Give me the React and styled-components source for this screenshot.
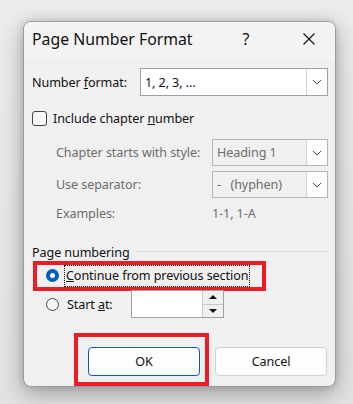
import React from "react";
import styled, { createGlobalStyle } from "styled-components";

const GlobalStyle = createGlobalStyle`
  html, body { margin: 0; padding: 0; }
  body {
    background: linear-gradient(#ececec, #e2e2e2);
    font-family: "Noto Sans", "Open Sans", sans-serif;
    color: #111111;
  }
  * { box-sizing: border-box; }
`;

const Page = styled.div`
  width: 353px;
  height: 404px;
  padding: 21px 0 0 23px;
  overflow: hidden;
`;

const Dialog = styled.div`
  width: 313px;
  height: 366px;
  border: 1px solid #9c9c9c;
  border-radius: 8px;
  background: #f0f0f0;
  box-shadow: 0 6px 22px rgba(0, 0, 0, 0.32), 0 0 6px rgba(0, 0, 0, 0.12);
  display: flex;
  flex-direction: column;
`;

const TitleBar = styled.div`
  height: 37px;
  flex: none;
  display: flex;
  align-items: center;
  padding-left: 8px;
  background: #f3f3f3;
  border-radius: 7px 7px 0 0;
`;

const Title = styled.div`
  flex: 1;
  font-size: 15.8px;
  color: #111111;
  padding-bottom: 3px;
`;

const TitleButton = styled.div`
  width: ${(p) => p.$w}px;
  margin-right: ${(p) => p.$mr || 0}px;
  height: 37px;
  display: flex;
  align-items: center;
  justify-content: center;
  font-size: 16px;
  color: #111111;
  padding-bottom: 3px;
`;

const Body = styled.div`
  flex: 1;
  padding: 9px 7px 0 8px;
  display: flex;
  flex-direction: column;
  font-size: 12.6px;
  letter-spacing: -0.1px;
`;

const Row = styled.div`
  display: flex;
  align-items: center;
  height: ${(p) => p.$h}px;
  margin-top: ${(p) => p.$mt || 0}px;
  padding-left: ${(p) => p.$indent || 0}px;
  position: relative;
  flex: none;
`;

const Label = styled.div`
  width: ${(p) => (p.$w ? `${p.$w}px` : "auto")};
  flex: none;
  color: ${(p) => (p.$disabled ? "#6d6d6d" : "#111111")};
  white-space: nowrap;
`;

const Select = styled.div`
  flex: 1;
  height: 100%;
  display: flex;
  border: 1px solid ${(p) => (p.$disabled ? "#b4b4b4" : "#a0a0a0")};
  background: ${(p) => (p.$disabled ? "#f0f0f0" : "#ffffff")};
`;

const SelectValue = styled.div`
  flex: 1;
  display: flex;
  align-items: center;
  padding-left: 4px;
  color: ${(p) => (p.$disabled ? "#6d6d6d" : "#111111")};
  white-space: pre;
`;

const SelectButton = styled.div`
  width: 21px;
  flex: none;
  display: flex;
  align-items: center;
  justify-content: center;
  background: #ffffff;
  border-left: 1px solid #d6d6d6;
`;

const Checkbox = styled.div`
  width: 15px;
  height: 15px;
  border: 1px solid #454545;
  border-radius: 3px;
  background: #f8f8f8;
  margin-right: 6px;
  flex: none;
`;

const Radio = styled.div`
  width: 13px;
  height: 13px;
  border-radius: 50%;
  flex: none;
  margin-right: 8px;
  display: flex;
  align-items: center;
  justify-content: center;
  border: ${(p) => (p.$checked ? "none" : "1px solid #454545")};
  background: ${(p) => (p.$checked ? "#005fb8" : "#f8f8f8")};
  &::after {
    content: "";
    display: ${(p) => (p.$checked ? "block" : "none")};
    width: 5px;
    height: 5px;
    border-radius: 50%;
    background: #ffffff;
  }
`;

const FocusLabel = styled.div`
  outline: 1px dotted #111111;
  outline-offset: 0;
  padding: 0 1px;
  margin-left: -2px;
  height: 20px;
  display: flex;
  align-items: center;
  white-space: nowrap;
`;

const GroupHeader = styled.div`
  display: flex;
  align-items: center;
  height: 18px;
  margin-top: 20px;
  flex: none;
  &::after {
    content: "";
    flex: 1;
    height: 1px;
    background: #d9d9d9;
    margin-left: 7px;
    margin-top: -2px;
  }
`;

const Highlight = styled.div`
  position: absolute;
  top: ${(p) => p.$t}px;
  left: ${(p) => p.$l}px;
  width: ${(p) => p.$w}px;
  height: ${(p) => p.$h}px;
  border: 4px solid #ed1c24;
  pointer-events: none;
`;

const Spinner = styled.div`
  width: 93px;
  height: 28px;
  border: 1px solid #a0a0a0;
  background: #ffffff;
  display: flex;
  justify-content: flex-end;
`;

const SpinButtons = styled.div`
  width: 21px;
  display: flex;
  flex-direction: column;
  border-left: 1px solid #c8c8c8;
`;

const SpinButton = styled.div`
  flex: 1;
  display: flex;
  align-items: center;
  justify-content: center;
  background: #f0f0f0;
  border-top: ${(p) => (p.$bottom ? "1px solid #c8c8c8" : "none")};
  &::after {
    content: "";
    width: 0;
    height: 0;
    border-left: 4px solid transparent;
    border-right: 4px solid transparent;
    ${(p) =>
      p.$bottom
        ? "border-top: 4px solid #111111;"
        : "border-bottom: 4px solid #111111;"}
  }
`;

const ButtonRow = styled.div`
  display: flex;
  justify-content: flex-end;
  gap: 15px;
  margin-top: 29px;
  padding-right: 1px;
  flex: none;
`;

const ButtonWrap = styled.div`
  position: relative;
`;

const Button = styled.div`
  width: 112px;
  height: 29px;
  border-radius: 4px;
  display: flex;
  align-items: center;
  justify-content: center;
  background: #fdfdfd;
  border: 1px solid ${(p) => (p.$primary ? "#005fb8" : "#d0d0d0")};
  color: #111111;
`;

const Chevron = () => (
  <svg width="10" height="6" viewBox="0 0 10 6">
    <path d="M1 1 L5 5 L9 1" fill="none" stroke="#505050" strokeWidth="1" />
  </svg>
);

const CloseIcon = () => (
  <svg width="12" height="12" viewBox="0 0 12 12">
    <path d="M0.5 0.5 L11.5 11.5 M11.5 0.5 L0.5 11.5" stroke="#111111" strokeWidth="1.1" />
  </svg>
);

export default function App() {
  return (
    <>
      <GlobalStyle />
      <Page>
        <Dialog>
          <TitleBar>
            <Title>Page Number Format</Title>
            <TitleButton $w={40} $mr={20}>?</TitleButton>
            <TitleButton $w={46}>
              <CloseIcon />
            </TitleButton>
            <TitleButton $w={3} />
          </TitleBar>
          <Body>
            <Row $h={28}>
              <Label $w={108}>
                Number <u>f</u>ormat:
              </Label>
              <Select>
                <SelectValue>1, 2, 3, …</SelectValue>
                <SelectButton>
                  <Chevron />
                </SelectButton>
              </Select>
            </Row>
            <Row $h={20} $mt={12}>
              <Checkbox />
              <Label>
                Include chapter <u>n</u>umber
              </Label>
            </Row>
            <Row $h={27} $mt={11} $indent={24}>
              <Label $w={156} $disabled>
                Chapter starts with style:
              </Label>
              <Select $disabled>
                <SelectValue $disabled>Heading 1</SelectValue>
                <SelectButton>
                  <Chevron />
                </SelectButton>
              </Select>
            </Row>
            <Row $h={27} $mt={5} $indent={24}>
              <Label $w={156} $disabled>
                Use separator:
              </Label>
              <Select $disabled>
                <SelectValue $disabled>{"-   (hyphen)"}</SelectValue>
                <SelectButton>
                  <Chevron />
                </SelectButton>
              </Select>
            </Row>
            <Row $h={20} $mt={5} $indent={24}>
              <Label $w={156} $disabled>
                Examples:
              </Label>
              <Label $disabled>1-1, 1-A</Label>
            </Row>
            <GroupHeader>Page numbering</GroupHeader>
            <Row $h={29} $indent={14}>
              <Radio $checked />
              <FocusLabel>
                <span>
                  <u>C</u>ontinue from previous section
                </span>
              </FocusLabel>
              <Highlight $t={0} $l={1} $w={233} $h={30} />
            </Row>
            <Row $h={28} $indent={14}>
              <Radio />
              <Label $w={64}>
                Start <u>a</u>t:
              </Label>
              <Spinner>
                <SpinButtons>
                  <SpinButton />
                  <SpinButton $bottom />
                </SpinButtons>
              </Spinner>
            </Row>
            <ButtonRow>
              <ButtonWrap>
                <Button $primary>OK</Button>
                <Highlight $t={-14} $l={-14} $w={135} $h={53} />
              </ButtonWrap>
              <ButtonWrap>
                <Button>Cancel</Button>
              </ButtonWrap>
            </ButtonRow>
          </Body>
        </Dialog>
      </Page>
    </>
  );
}
